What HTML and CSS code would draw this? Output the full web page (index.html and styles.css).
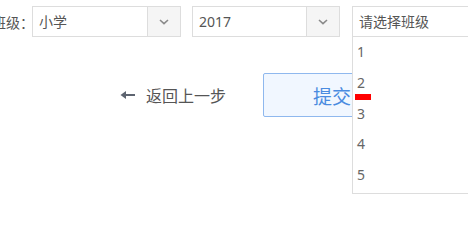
FILE: index.html
```html
<!DOCTYPE html>
<html lang="zh">
<head>
<meta charset="utf-8">
<title>选择班级</title>
<link rel="stylesheet" href="styles.css">
</head>
<body>
<div class="page">
  <div class="filters">
    <span class="label">班级：</span>
    <div class="select s1">
      <span class="value">小学</span>
      <span class="caret"><svg width="10" height="6" viewBox="0 0 10 6"><path d="M1 1 L5 4.6 L9 1" fill="none" stroke="#8a8a8a" stroke-width="1.6"/></svg></span>
    </div>
    <div class="select s2">
      <span class="value">2017</span>
      <span class="caret"><svg width="10" height="6" viewBox="0 0 10 6"><path d="M1 1 L5 4.6 L9 1" fill="none" stroke="#8a8a8a" stroke-width="1.6"/></svg></span>
    </div>
    <div class="select s3">
      <span class="value">请选择班级</span>
      <ul class="menu">
        <li>1</li>
        <li>2</li>
        <li>3</li>
        <li>4</li>
        <li>5</li>
        <span class="marker"></span>
      </ul>
    </div>
  </div>
  <div class="actions">
    <a class="back" href="#"><svg width="16" height="10" viewBox="0 0 16 10"><path d="M15 5 H5" stroke="#5d6470" stroke-width="2"/><path d="M0.5 5 L6 1 V9 Z" fill="#5d6470"/></svg><span>返回上一步</span></a>
    <button class="submit">提交</button>
  </div>
</div>
</body>
</html>
```
FILE: styles.css
```css
html, body {
  margin: 0;
  padding: 0;
  background: #fff;
  overflow: hidden;
}
body {
  width: 468px;
  height: 208px;
  font-family: "Noto Sans", "Noto Sans CJK SC", sans-serif;
  color: #555;
}
.page {
  margin-left: -8px;
  padding-top: 6px;
}
.filters {
  display: flex;
  align-items: center;
}
.filters > * {
  flex-shrink: 0;
}
.label {
  width: 40px;
  font-size: 14px;
  white-space: nowrap;
  color: #555;
}
.select {
  position: relative;
  display: flex;
  height: 31px;
  box-sizing: border-box;
  border: 1px solid #ddd;
  background: #fff;
  font-size: 14px;
}
.s1 { width: 149px; }
.s2 { width: 148px; margin-left: 11px; }
.s3 { width: 130px; margin-left: 12px; }
.value {
  flex: 1;
  padding-left: 6px;
  line-height: 29px;
  white-space: nowrap;
  color: #555;
}
.caret {
  width: 32px;
  border-left: 1px solid #ddd;
  background: #f5f5f5;
  display: flex;
  align-items: center;
  justify-content: center;
}
.menu {
  position: absolute;
  left: -1px;
  top: 29px;
  width: 130px;
  height: 158px;
  box-sizing: border-box;
  margin: 0;
  padding: 0;
  list-style: none;
  background: #fff;
  border: 1px solid #ddd;
}
.menu li {
  height: 30.8px;
  line-height: 30.8px;
  padding-left: 4px;
  font-size: 14px;
  color: #666;
}
.marker {
  position: absolute;
  left: 2px;
  top: 57px;
  width: 16px;
  height: 6px;
  background: #f00;
}
.actions {
  display: flex;
  align-items: center;
  margin-top: 36px;
  padding-left: 128px;
}
.back {
  display: flex;
  align-items: center;
  text-decoration: none;
  color: #555;
  font-size: 16px;
}
.back svg {
  margin-right: 10px;
}
.submit {
  margin-left: 37px;
  width: 138px;
  height: 44px;
  box-sizing: border-box;
  border: 1px solid #8fb8ee;
  border-radius: 2px;
  background: #f1f7ff;
  color: #4a8be0;
  font-family: "Noto Sans CJK SC", sans-serif;
  font-size: 19px;
  padding: 0;
}
```
